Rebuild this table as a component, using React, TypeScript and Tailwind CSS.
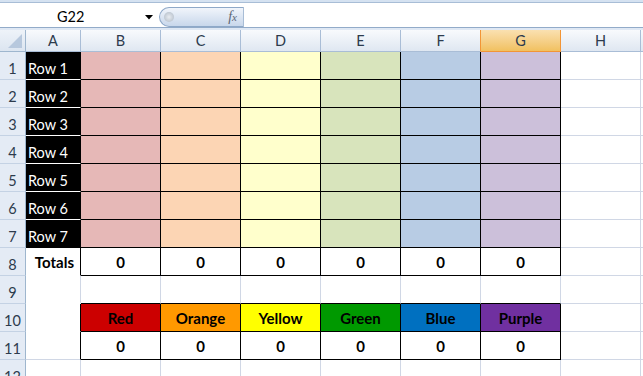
import React from "react";

const G = "border-[#d0d7e5]";

function HeaderCell({ label, active, prevActive }: { label: string; active?: boolean; prevActive?: boolean }) {
  if (active) {
    return (
      <div className="flex items-center justify-center bg-linear-to-b from-[#fae0b0] to-[#f1c15f] border-r border-b border-[#f29536] text-[14.5px] text-[#2d3b4d] pt-[1px]">
        {label}
      </div>
    );
  }
  return (
    <div
      className={
        "flex items-center justify-center bg-linear-to-b from-[#f8fafd] to-[#dfe7f1] border-r border-b border-[#a9bdd6] text-[14.5px] text-[#2d3b4d] pt-[1px] " +
        (prevActive ? "border-r-[#f29536]" : "")
      }
    >
      {label}
    </div>
  );
}

function RowHead({ n }: { n: number }) {
  return (
    <div className="flex items-end justify-center pb-[1px] bg-[#e4ebf5] border-r border-b border-r-[#9eb6ce] border-b-[#c4d2e4] text-[14.5px] text-[#2d3b4d] leading-[18px]">
      {n}
    </div>
  );
}

const pastel = ["bg-[#e6b8b7]", "bg-[#fcd5b4]", "bg-[#ffffcc]", "bg-[#d8e4bc]", "bg-[#b8cce4]", "bg-[#ccc0da]"];
const bright = ["bg-[#cc0000]", "bg-[#ff9900]", "bg-[#ffff00]", "bg-[#009900]", "bg-[#0070c0]", "bg-[#7030a0]"];
const names = ["Red", "Orange", "Yellow", "Green", "Blue", "Purple"];

function HCell() {
  return <div className={"border-r border-b " + G}></div>;
}
function Tail() {
  return <div className={"border-b " + G}></div>;
}

export default function App() {
  const rows: React.ReactNode[] = [];
  for (let r = 1; r <= 7; r++) {
    rows.push(<RowHead key={"h" + r} n={r} />);
    rows.push(
      <div
        key={"a" + r}
        className={
          "flex items-end pl-[2px] pb-[1px] bg-black text-white border-r border-b border-r-black text-[14.5px] leading-[18px] " +
          (r === 7 ? "border-b-black" : "border-b-white")
        }
      >
        Row {r}
      </div>
    );
    pastel.forEach((c, i) => {
      rows.push(<div key={"c" + r + i} className={"border-r border-b border-black " + c}></div>);
    });
    rows.push(<HCell key={"x" + r} />);
    rows.push(<Tail key={"t" + r} />);
  }
  // row 8
  rows.push(<RowHead key="h8" n={8} />);
  rows.push(
    <div key="a8" className="flex items-center justify-end pr-[6px] pt-[2px] border-r border-b border-r-black border-b-white font-bold text-[15px]">
      Totals
    </div>
  );
  for (let i = 0; i < 6; i++)
    rows.push(
      <div key={"c8" + i} className="flex items-center justify-center pt-[2px] border-r border-b border-black font-bold text-[15px]">
        0
      </div>
    );
  rows.push(<HCell key="x8" />);
  rows.push(<Tail key="t8" />);
  // row 9
  rows.push(<RowHead key="h9" n={9} />);
  rows.push(<div key="a9" className="border-r border-b border-r-[#d0d7e5] border-b-white"></div>);
  for (let i = 0; i < 6; i++)
    rows.push(<div key={"c9" + i} className="border-r border-b border-r-[#d0d7e5] border-b-black"></div>);
  rows.push(<HCell key="x9" />);
  rows.push(<Tail key="t9" />);
  // row 10
  rows.push(<RowHead key="h10" n={10} />);
  rows.push(<div key="a10" className="border-r border-b border-r-black border-b-white"></div>);
  bright.forEach((c, i) => {
    rows.push(
      <div
        key={"c10" + i}
        className={"flex items-center justify-center pt-[2px] border-r border-b border-black font-bold text-[15px] text-black " + c}
      >
        {names[i]}
      </div>
    );
  });
  rows.push(<HCell key="x10" />);
  rows.push(<Tail key="t10" />);
  // row 11
  rows.push(<RowHead key="h11" n={11} />);
  rows.push(<div key="a11" className="border-r border-b border-r-black border-b-[#d0d7e5]"></div>);
  for (let i = 0; i < 6; i++)
    rows.push(
      <div key={"c11" + i} className="flex items-center justify-center pt-[2px] border-r border-b border-black font-bold text-[15px]">
        0
      </div>
    );
  rows.push(<HCell key="x11" />);
  rows.push(<Tail key="t11" />);
  // row 12
  rows.push(<RowHead key="h12" n={12} />);
  rows.push(<div key="a12" className={"border-r border-b " + G}></div>);
  for (let i = 0; i < 6; i++) rows.push(<div key={"c12" + i} className={"border-r border-b " + G}></div>);
  rows.push(<HCell key="x12" />);
  rows.push(<Tail key="t12" />);

  return (
    <div className="w-[643px] h-[376px] overflow-hidden bg-white font-['Lato',sans-serif] text-black">
      {/* top strip */}
      <div className="h-[3px] bg-[#d5e2f1] border-b border-[#a8bdd6]"></div>
      {/* formula row */}
      <div className="h-[24px] flex">
        <div className="w-[159px] flex items-center relative">
          <span className="ml-[57px] pt-[4px] text-[14.5px] text-black">G22</span>
          <svg className="absolute left-[145px] top-[12px]" width="8" height="5" viewBox="0 0 8 5">
            <path d="M0 0 H8 L4 4.5 Z" fill="#000" />
          </svg>
        </div>
        <div className="w-[84px] mt-[4px] h-[20px] rounded-l-full border border-r-0 border-[#8ea8c8] bg-linear-to-b from-[#f1f5fb] to-[#c8d7eb] flex items-center justify-between pl-[4px] pr-[6px]">
          <div className="w-[10px] h-[10px] rounded-full bg-radial from-[#e8ecf1] to-[#aeb8c4]"></div>
          <span className="font-['Liberation_Serif',serif] italic text-[14px] text-[#5b6676] pb-[1px]">
            f<span className="text-[11px]">x</span>
          </span>
        </div>
        <div className="flex-1 mt-[4px] border-l border-[#a8bdd6]"></div>
      </div>
      <div className="h-px bg-[#92abc9]"></div>
      <div className="h-[2px] bg-[#dfe8f4]"></div>
      {/* grid */}
      <div className="grid grid-cols-[26px_55px_repeat(7,80px)_2px] grid-rows-[22px_repeat(12,28px)]">
        <div className="relative bg-linear-to-b from-[#eef3f9] to-[#dce5f0] border-r border-b border-[#9eb6ce]">
          <svg className="absolute right-[3px] bottom-[3px]" width="14" height="14" viewBox="0 0 14 14">
            <path d="M14 0 V14 H0 Z" fill="#b7c8dd" />
          </svg>
        </div>
        <HeaderCell label="A" />
        <HeaderCell label="B" />
        <HeaderCell label="C" />
        <HeaderCell label="D" />
        <HeaderCell label="E" />
        <HeaderCell label="F" prevActive />
        <HeaderCell label="G" active />
        <HeaderCell label="H" />
        <div className="bg-linear-to-b from-[#f8fafd] to-[#dfe7f1] border-b border-[#a9bdd6]"></div>
        {rows}
      </div>
    </div>
  );
}
